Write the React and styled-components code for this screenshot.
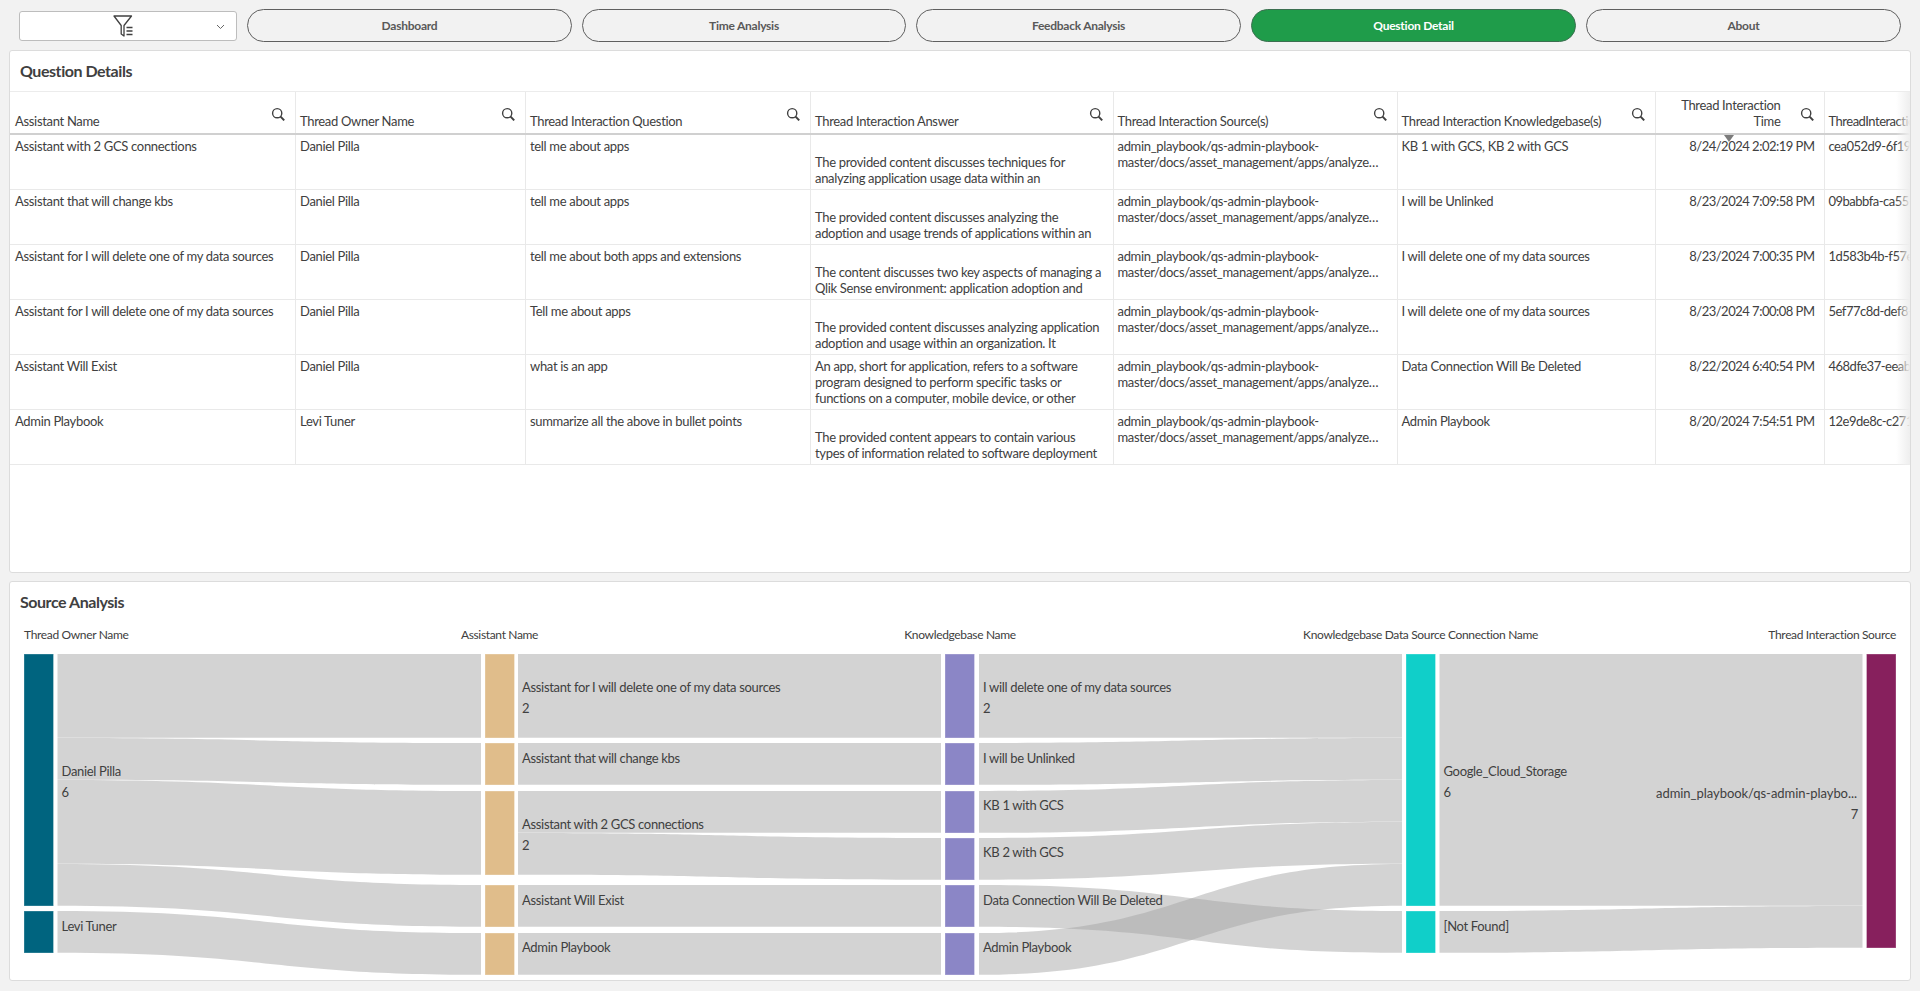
import styled, { createGlobalStyle } from 'styled-components';

const GlobalStyle = createGlobalStyle`
  html, body {
    margin: 0;
    padding: 0;
    background: #f2f2f2;
  }
  * {
    box-sizing: border-box;
  }
`

const FONT = `Lato, "Noto Sans", sans-serif`

const Page = styled.div`
  width: 1920px;
  height: 991px;
  padding: 9px 9px 0;
  display: flex;
  flex-direction: column;
  gap: 8px;
  font-family: ${FONT};
  color: #404040;
  overflow: hidden;
`
const NavBar = styled.nav`
  height: 33px;
  display: flex;
  align-items: center;
  gap: 10px;
  padding-left: 10px;
`
const FilterBox = styled.div`
  width: 218px;
  height: 30px;
  background: #fff;
  border: 1px solid #bdbdbd;
  border-radius: 3px;
  display: flex;
  align-items: center;
  position: relative;
  padding-left: 93px;
  color: #404040;
`
const Chevron = styled.svg`
  position: absolute;
  right: 11px;
  top: 12px;
`
const NavButton = styled.button`
  flex: 0 0 ${p => p.$width}px;
  height: 33px;
  border-radius: 17px;
  border: 1px solid ${p => (p.$active ? '#3c6f50' : '#5f5f5f')};
  background: ${p => (p.$active ? '#1f9c4a' : '#f2f2f2')};
  color: ${p => (p.$active ? '#fff' : '#595959')};
  font-family: ${FONT};
  font-size: 12px;
  font-weight: 700;
  letter-spacing: -0.25px;
  padding: 0;
`
const Panel = styled.section`
  height: ${p => p.$height}px;
  background: #fff;
  border: 1px solid #dcdcdc;
  border-radius: 3px;
  overflow: hidden;
  flex: none;
`
const PanelTitle = styled.h2`
  margin: 0;
  height: ${p => p.$height}px;
  padding: ${p => p.$top}px 0 0 10px;
  font-size: 16px;
  line-height: 20px;
  font-weight: 700;
  letter-spacing: -0.45px;
  color: #404040;
  border-bottom: ${p => (p.$ruled ? '1px solid #ececec' : 'none')};
`
const TableWrap = styled.div`
  position: relative;
  overflow: hidden;
  height: 373px;
`
const Row = styled.div`
  display: grid;
  grid-template-columns: 285px 230px 285px 302.5px 284px 258px 169px 120px;
  height: ${p => (p.$head ? 43 : 55)}px;
  border-bottom: ${p => (p.$head ? '2px solid #d0d0d0' : '1px solid #e9e9e9')};
  width: 2134px;
`
const HeadCell = styled.div`
  display: flex;
  align-items: flex-end;
  justify-content: space-between;
  padding: 0 9px 4px 4px;
  border-left: 1px solid ${p => (p.$first ? 'transparent' : '#e9e9e9')};
  font-size: 13px;
  line-height: 16px;
  letter-spacing: ${p => (p.$tight ? -0.5 : -0.32)}px;
  white-space: nowrap;
`
const HeadText = styled.span`
  flex: 1;
  text-align: ${p => (p.$right ? 'right' : 'left')};
  white-space: ${p => (p.$right ? 'normal' : 'nowrap')};
  padding-right: ${p => (p.$right ? 19 : 0)}px;
`
const SearchIcon = styled.svg`
  flex: none;
  align-self: flex-start;
  margin-top: 15px;
`
const Cell = styled.div`
  padding: 3px ${p => (p.$right ? 9 : 4)}px 0 4px;
  border-left: 1px solid ${p => (p.$first ? 'transparent' : '#e9e9e9')};
  font-size: 13px;
  line-height: 16px;
  letter-spacing: ${p => (p.$tight ? -0.5 : -0.32)}px;
  overflow: hidden;
  white-space: ${p => (p.$nowrap ? 'nowrap' : 'pre-line')};
  text-align: ${p => (p.$right ? 'right' : 'left')};
`
const SortMark = styled.div`
  position: absolute;
  left: 1714px;
  top: 43px;
  width: 0;
  height: 0;
  border-left: 5px solid transparent;
  border-right: 5px solid transparent;
  border-top: 7px solid #7b7b7b;
`
const ScrollFade = styled.div`
  position: absolute;
  right: 0;
  top: 0;
  bottom: 0;
  width: 14px;
  background: linear-gradient(to right, rgba(238, 238, 238, 0), #eeeeee);
`
const ChartSvg = styled.svg`
  display: block;
  font-family: ${FONT};
`
const ChartHead = styled.text`
  font-size: 12px;
  letter-spacing: -0.34px;
  fill: #404040;
  dominant-baseline: central;
`
const ChartLabel = styled.text`
  font-size: 13px;
  letter-spacing: ${p => p.$spacing ?? -0.32}px;
  fill: #404040;
  dominant-baseline: central;
`

const NAV = [
  { label: 'Dashboard', width: 325 },
  { label: 'Time Analysis', width: 324 },
  { label: 'Feedback Analysis', width: 325 },
  { label: 'Question Detail', width: 325, active: true },
  { label: 'About', width: 315 },
]

const COLUMNS = [
  'Assistant Name',
  'Thread Owner Name',
  'Thread Interaction Question',
  'Thread Interaction Answer',
  'Thread Interaction Source(s)',
  'Thread Interaction Knowledgebase(s)',
]

const SOURCE = 'admin_playbook/qs-admin-playbook-\nmaster/docs/asset_management/apps/analyze…'

const ROWS = [
  ['Assistant with 2 GCS connections', 'Daniel Pilla', 'tell me about apps', '\nThe provided content discusses techniques for\nanalyzing application usage data within an', 'KB 1 with GCS, KB 2 with GCS', '8/24/2024 2:02:19 PM', 'cea052d9-6f19-4a10-9c55'],
  ['Assistant that will change kbs', 'Daniel Pilla', 'tell me about apps', '\nThe provided content discusses analyzing the\nadoption and usage trends of applications within an', 'I will be Unlinked', '8/23/2024 7:09:58 PM', '09babbfa-ca55-4b7e-8d21'],
  ['Assistant for I will delete one of my data sources', 'Daniel Pilla', 'tell me about both apps and extensions', '\nThe content discusses two key aspects of managing a\nQlik Sense environment: application adoption and', 'I will delete one of my data sources', '8/23/2024 7:00:35 PM', '1d583b4b-f57e-4e02-a3c6'],
  ['Assistant for I will delete one of my data sources', 'Daniel Pilla', 'Tell me about apps', '\nThe provided content discusses analyzing application\nadoption and usage within an organization. It', 'I will delete one of my data sources', '8/23/2024 7:00:08 PM', '5ef77c8d-def8-49a1-b7d0'],
  ['Assistant Will Exist', 'Daniel Pilla', 'what is an app', 'An app, short for application, refers to a software\nprogram designed to perform specific tasks or\nfunctions on a computer, mobile device, or other', 'Data Connection Will Be Deleted', '8/22/2024 6:40:54 PM', '468dfe37-eeab-4c93-91fe'],
  ['Admin Playbook', 'Levi Tuner', 'summarize all the above in bullet points', '\nThe provided content appears to contain various\ntypes of information related to software deployment', 'Admin Playbook', '8/20/2024 7:54:51 PM', '12e9de8c-c271-4d58-8e3a'],
]

const NODES = [
  { x: 24, fill: '#00647f', spans: [[654, 906], [911, 953]] },
  { x: 485, fill: '#e0bd8b', spans: [[654, 738], [743, 785], [791, 875], [885, 927], [933, 975]] },
  { x: 945, fill: '#8b86c6', spans: [[654, 738], [743, 785], [791, 833], [838, 880], [885, 927], [933, 975]] },
  { x: 1406, fill: '#10cfc9', spans: [[654, 906], [911, 953]] },
  { x: 1866.5, fill: '#87205d', spans: [[654, 948]] },
]

// x0, x1, then source top, target top, thickness
const LINKS = [
  [57.5, 481, 654, 654, 84], [57.5, 481, 738, 743, 42], [57.5, 481, 780, 791, 84], [57.5, 481, 864, 885, 42], [57.5, 481, 911, 933, 42],
  [518, 941, 654, 654, 84], [518, 941, 743, 743, 42], [518, 941, 791, 791, 42], [518, 941, 833, 838, 42], [518, 941, 885, 885, 42], [518, 941, 933, 933, 42],
  [979, 1402, 654, 654, 84], [979, 1402, 743, 738, 42], [979, 1402, 791, 780, 42], [979, 1402, 838, 822, 42], [979, 1402, 933, 864, 42], [979, 1402, 885, 911, 42],
  [1439.5, 1862.5, 654, 654, 252], [1439.5, 1862.5, 911, 906, 42],
]

const LABELS = [
  [61.5, 771, 'Daniel Pilla'], [61.5, 792, '6'], [61.5, 926, 'Levi Tuner'],
  [522, 687, 'Assistant for I will delete one of my data sources'], [522, 708, '2'], [522, 758, 'Assistant that will change kbs'],
  [522, 824, 'Assistant with 2 GCS connections'], [522, 845, '2'], [522, 900, 'Assistant Will Exist'], [522, 947, 'Admin Playbook'],
  [983, 687, 'I will delete one of my data sources'], [983, 708, '2'], [983, 758, 'I will be Unlinked'],
  [983, 805, 'KB 1 with GCS'], [983, 852, 'KB 2 with GCS'], [983, 900, 'Data Connection Will Be Deleted'], [983, 947, 'Admin Playbook'],
  [1443.5, 771, 'Google_Cloud_Storage'], [1443.5, 792, '6'], [1443.5, 926, '[Not Found]'],
]

function linkPath([x0, x1, s, t, h]) {
  const mid = (x0 + x1) / 2
  // a hair under full thickness so neighbouring links keep a thin seam
  const b = h - 0.2
  return `M${x0} ${s}C${mid} ${s} ${mid} ${t} ${x1} ${t}L${x1} ${t + b}C${mid} ${t + b} ${mid} ${s + b} ${x0} ${s + b}Z`
}

const Search = () => (
  <SearchIcon width="15" height="15" viewBox="0 0 15 15" fill="none" stroke="#404040">
    <circle cx="6.2" cy="6.2" r="4.6" strokeWidth="1.4" />
    <path d="M9.6 9.6 13.2 13.4" strokeWidth="2" />
  </SearchIcon>
)

const FilterIcon = () => (
  <svg width="21" height="22" viewBox="0 0 21 22" fill="none" stroke="#404040">
    <path d="M1 1H18.5L11 10.5V21L8.2 19V10.5Z" strokeWidth="1.3" strokeLinejoin="round" />
    <path d="M13.5 12.5H19.5M13.5 16H19.5M13.5 19.5H19.5" strokeWidth="1.5" />
  </svg>
)

function QuestionTable() {
  return (
    <TableWrap>
      <Row $head>
        {COLUMNS.map((name, i) => (
          <HeadCell key={name} $first={i === 0}>
            <span>{name}</span>
            <Search />
          </HeadCell>
        ))}
        <HeadCell>
          <HeadText $right>Thread Interaction Time</HeadText>
          <Search />
        </HeadCell>
        <HeadCell $tight>ThreadInteractionId</HeadCell>
      </Row>
      {ROWS.map(r => (
        <Row key={r[6]}>
          <Cell $first>{r[0]}</Cell>
          <Cell>{r[1]}</Cell>
          <Cell>{r[2]}</Cell>
          <Cell>{r[3]}</Cell>
          <Cell>{SOURCE}</Cell>
          <Cell>{r[4]}</Cell>
          <Cell $right $tight>{r[5]}</Cell>
          <Cell $nowrap $tight>{r[6]}</Cell>
        </Row>
      ))}
      <SortMark />
      <ScrollFade />
    </TableWrap>
  )
}

function SankeyChart() {
  return (
    <ChartSvg width="1900" height="355" viewBox="10 625 1900 355">
      <ChartHead x="24" y="634">Thread Owner Name</ChartHead>
      <ChartHead x="499.5" y="634" textAnchor="middle">Assistant Name</ChartHead>
      <ChartHead x="960" y="634" textAnchor="middle">Knowledgebase Name</ChartHead>
      <ChartHead x="1420.5" y="634" textAnchor="middle">Knowledgebase Data Source Connection Name</ChartHead>
      <ChartHead x="1896" y="634" textAnchor="end">Thread Interaction Source</ChartHead>
      {LINKS.map((l, i) => (
        <path key={i} d={linkPath(l)} fill="#a3a3a3" fillOpacity="0.48" />
      ))}
      {NODES.map(n =>
        n.spans.map(([top, bottom]) => (
          <rect
            key={n.x + '-' + top}
            x={n.x + 0.5}
            y={top + 0.5}
            width="28.5"
            height={bottom - top - 1}
            fill={n.fill}
            stroke={n.fill}
            strokeOpacity="0.7"
          />
        ))
      )}
      {LABELS.map(([x, y, text]) => (
        <ChartLabel key={x + '-' + y} x={x} y={y}>{text}</ChartLabel>
      ))}
      <ChartLabel x="1857" y="793" textAnchor="end" $spacing={-0.05}>admin_playbook/qs-admin-playbo...</ChartLabel>
      <ChartLabel x="1858" y="814" textAnchor="end">7</ChartLabel>
    </ChartSvg>
  )
}

export default function App() {
  return (
    <>
      <GlobalStyle />
      <Page>
        <NavBar>
          <FilterBox>
            <FilterIcon />
            <Chevron width="9" height="6" viewBox="0 0 9 6" fill="none" stroke="#666">
              <path d="M1 1 4.5 4.5 8 1" />
            </Chevron>
          </FilterBox>
          {NAV.map(n => (
            <NavButton key={n.label} $width={n.width} $active={n.active}>{n.label}</NavButton>
          ))}
        </NavBar>
        <Panel $height={523}>
          <PanelTitle $height={41} $top={10} $ruled>Question Details</PanelTitle>
          <QuestionTable />
        </Panel>
        <Panel $height={400}>
          <PanelTitle $height={43} $top={10}>Source Analysis</PanelTitle>
          <SankeyChart />
        </Panel>
      </Page>
    </>
  )
}
